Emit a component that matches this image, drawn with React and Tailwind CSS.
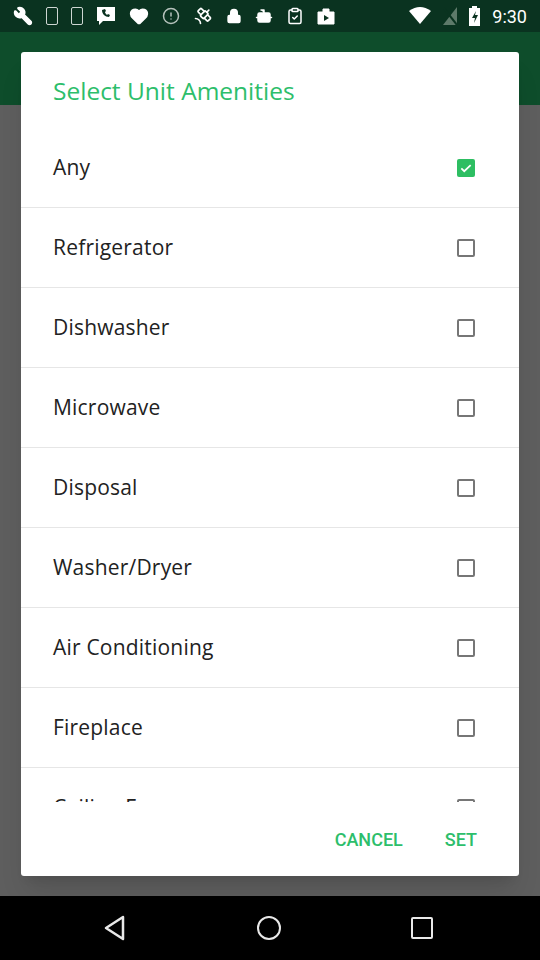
import {
  Wrench,
  Heart,
  Lock,
  Bot,
  Satellite,
  ClipboardCheck,
  Info,
} from "lucide-react";

const amenities = [
  "Any",
  "Refrigerator",
  "Dishwasher",
  "Microwave",
  "Disposal",
  "Washer/Dryer",
  "Air Conditioning",
  "Fireplace",
  "Ceiling Fans",
];

function Checkbox({ checked }) {
  if (checked) {
    return (
      <div className="w-[18px] h-[18px] rounded-[2px] bg-[#2dbe62] flex items-center justify-center">
        <svg width="14" height="14" viewBox="0 0 24 24" fill="none">
          <path d="M4 12.5l5 5L20 7" stroke="white" strokeWidth="3" />
        </svg>
      </div>
    );
  }
  return <div className="w-[18px] h-[18px] rounded-[2px] border-2 border-[#767676]" />;
}

function StatusBar() {
  return (
    <div className="h-[32px] bg-[#0a3320] flex items-center px-[13px] text-white">
      <div className="flex items-center gap-[13px]">
        <Wrench size={20} fill="white" strokeWidth={2} className="-scale-x-100" />
        <div className="w-[12px] h-[18px] border border-white/80 rounded-[2px]" />
        <div className="w-[12px] h-[18px] border border-white/80 rounded-[2px]" />
        <svg width="20" height="20" viewBox="0 0 20 20">
          <path d="M1 1h18v14H7l-4 4v-4H1z" fill="white" />
          <path d="M6 4c0 4 3 7 7 7l1-2-2-1-1 1c-1-1-2-2-2-3l1-1-1-2z" fill="#0a3320" />
        </svg>
        <Heart size={20} fill="white" stroke="white" />
        <Info size={18} className="opacity-70 rotate-180" />
        <Satellite size={20} />
        <Lock size={16} fill="white" />
        <Bot size={18} fill="white" />
        <ClipboardCheck size={18} />
        <svg width="18" height="18" viewBox="0 0 18 18">
          <path d="M1 5h16v12H1z M6 5V2h6v3" fill="white" stroke="white" />
          <path d="M7 8l5 3-5 3z" fill="#0a3320" />
        </svg>
      </div>
      <div className="ml-auto flex items-center gap-[12px]">
        <svg width="22" height="18" viewBox="0 0 22 18">
          <path d="M0 4Q11-4 22 4L11 17z" fill="white" />
        </svg>
        <svg width="14" height="18" viewBox="0 0 14 18">
          <path d="M0 18L14 0v18z" fill="#5e7a6a" />
          <path d="M0 0l14 18" stroke="#0a3320" strokeWidth="2" />
        </svg>
        <svg width="11" height="20" viewBox="0 0 11 20">
          <rect x="0" y="2" width="11" height="18" fill="white" />
          <rect x="3" y="0" width="5" height="3" fill="white" />
          <path d="M7 5L3 12h3l-1 5 4-8H6z" fill="#0a3320" />
        </svg>
        <span className="text-[18px] font-['Roboto',sans-serif]">9:30</span>
      </div>
    </div>
  );
}

function NavBar() {
  return (
    <div className="h-[64px] bg-black flex items-center pl-[103px] gap-[130px]">
      <svg width="24" height="26" viewBox="0 0 24 26">
        <path d="M20 2L3 13l17 11z" fill="none" stroke="#e8e8e8" strokeWidth="2.5" strokeLinejoin="round" />
      </svg>
      <div className="w-[24px] h-[24px] rounded-full border-[2.5px] border-[#e8e8e8]" />
      <div className="w-[22px] h-[22px] rounded-[2px] border-[2.5px] border-[#e8e8e8]" />
    </div>
  );
}

export default function App() {
  return (
    <div className="w-[540px] h-[960px] relative overflow-hidden bg-[#5e5e5e] flex flex-col font-['Open_Sans',sans-serif]">
      <StatusBar />
      <div className="h-[73px] bg-[#0e4d2b]" />
      <div className="flex-1" />
      <NavBar />

      {/* Dialog sits over the dimmed app */}
      <div className="absolute left-[21px] top-[52px] w-[498px] h-[824px] bg-white rounded-[3px] shadow-xl flex flex-col">
        <div className="h-[76px] pl-[32px] pt-[23px] shrink-0">
          <h2 className="text-[24.5px] leading-[32px] text-[#2dbe6b]">Select Unit Amenities</h2>
        </div>

        <div className="h-[674px] overflow-hidden shrink-0">
          {amenities.map((a, i) => (
            <div
              key={a}
              className="h-[80px] border-b border-[#e6e6e6] flex items-center pl-[32px] pr-[44px]"
            >
              <span className="text-[21px] text-[#222] tracking-[0.2px]">{a}</span>
              <div className="ml-auto">
                <Checkbox checked={i === 0} />
              </div>
            </div>
          ))}
        </div>

        <div className="flex-1 flex items-center justify-end pr-[42px] gap-[42px]">
          <button className="text-[18px] font-medium text-[#2dbe6b] font-['Roboto',sans-serif]">CANCEL</button>
          <button className="text-[18px] font-medium text-[#2dbe6b] font-['Roboto',sans-serif]">SET</button>
        </div>
      </div>
    </div>
  );
}
